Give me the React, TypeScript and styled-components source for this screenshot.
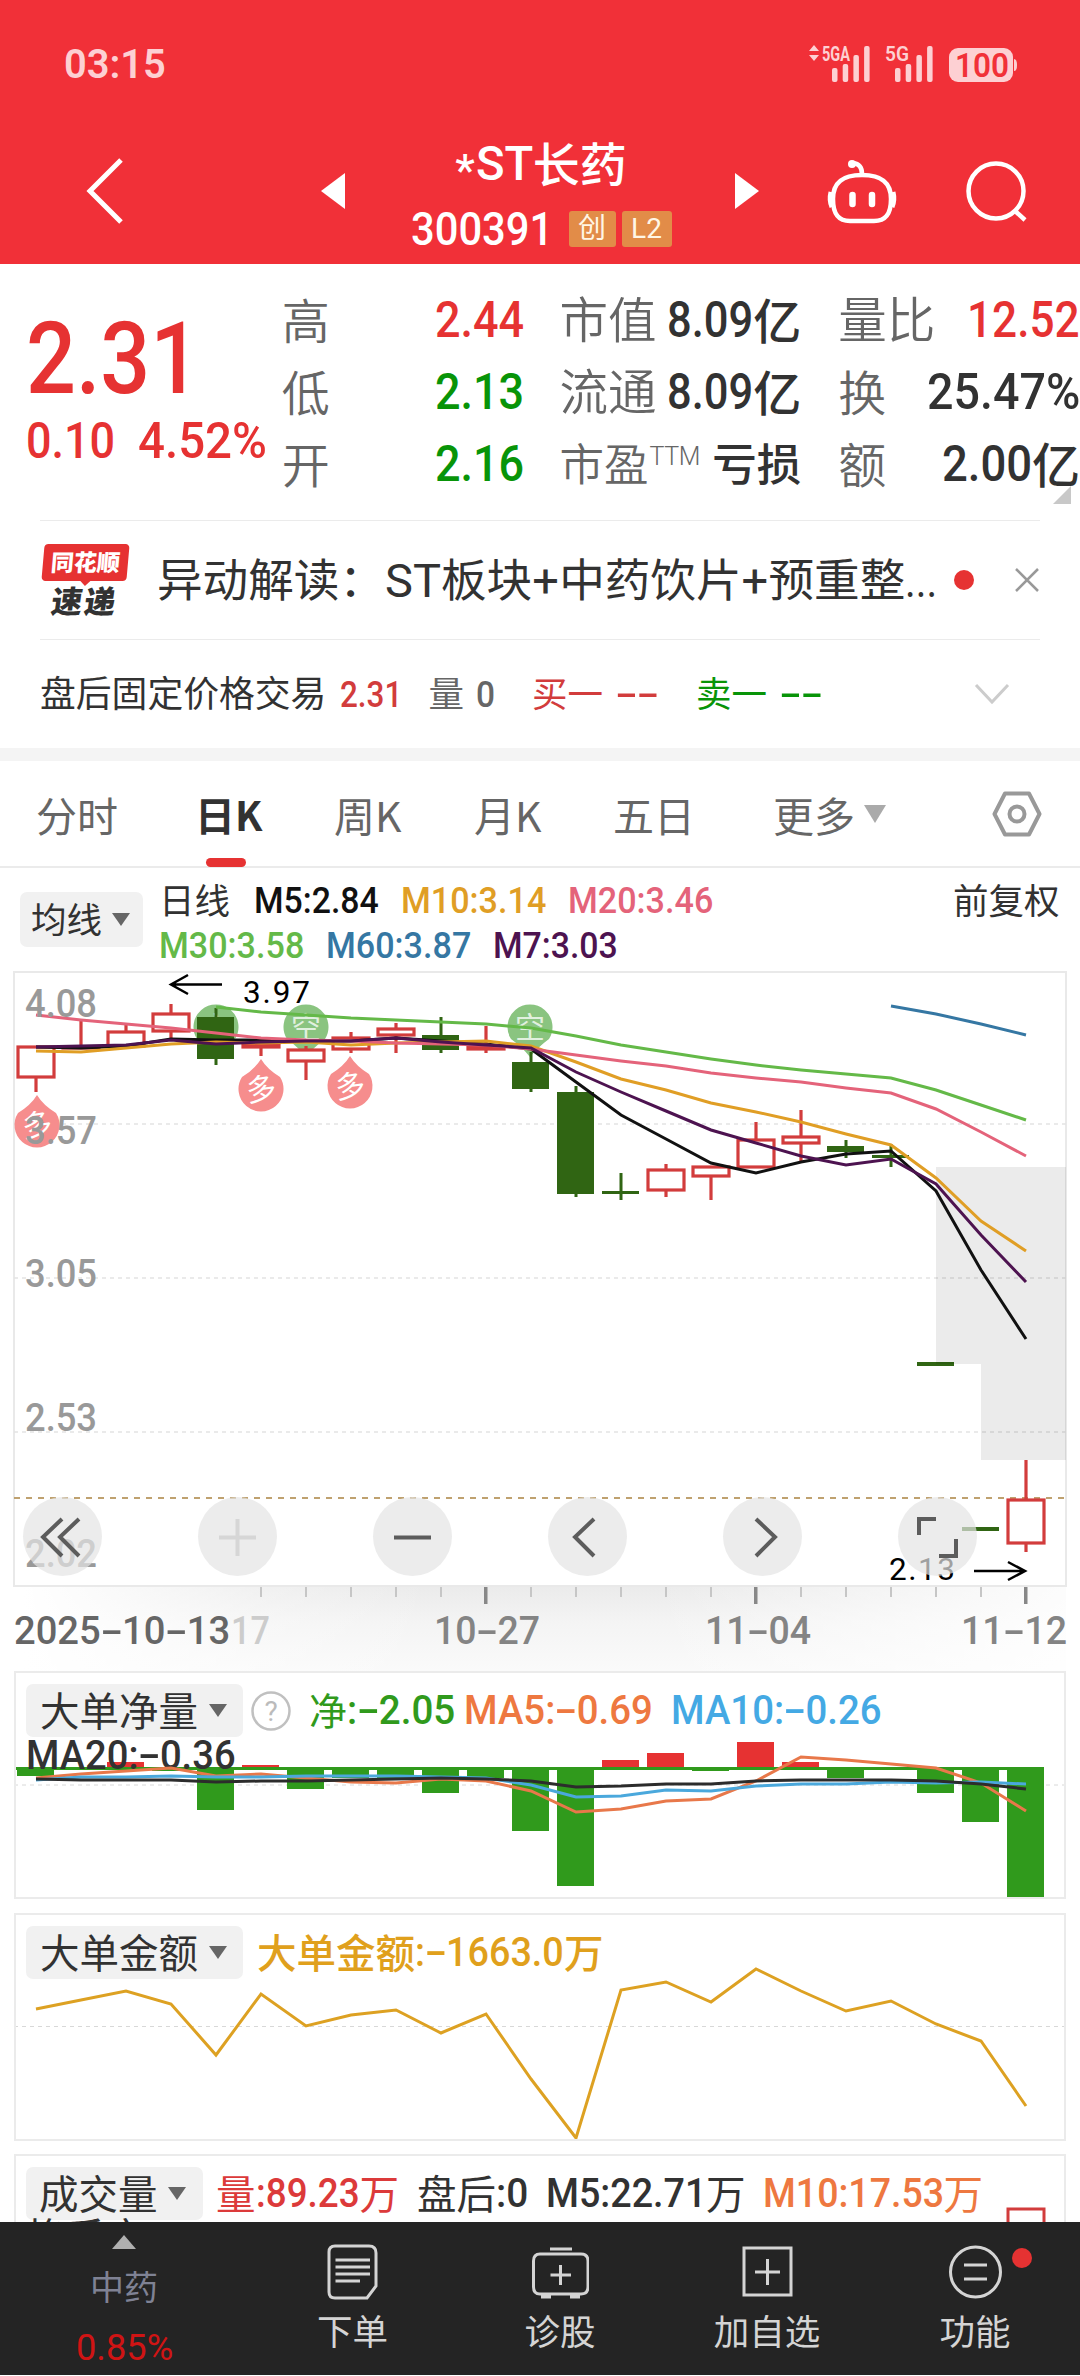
import React, { useLayoutEffect, useRef, useState } from 'react';
import styled, { createGlobalStyle, css } from 'styled-components';

const RED = '#e63232';
const GREEN = '#089408';
const INK = '#323232';
const GREY = '#666666';
const CJK = '"Noto Sans CJK SC", sans-serif';
const DIN = 'Roboto, "Noto Sans CJK SC", sans-serif';

const Global = createGlobalStyle`
  * { box-sizing: border-box; }
  html, body { margin: 0; padding: 0; background: #fff; }
  svg { display: block; flex: none; }
`;

/* ---------- text primitives ---------- */

type TextProps = { $s: number; $c?: string; $wt?: number; $ml?: number };

const textBase = css<TextProps>`
  flex: none;
  font-size: ${p => p.$s}px;
  line-height: 1;
  color: ${p => p.$c || INK};
  font-weight: ${p => p.$wt || 400};
  margin-left: ${p => p.$ml || 0}px;
  white-space: pre;
`;

const Han = styled.span<TextProps>`
  ${textBase}
  font-family: ${CJK};
  padding-bottom: ${p => p.$s * 0.1}px;
`;

const NumBox = styled.span<TextProps & { $w: number }>`
  ${textBase}
  display: block;
  width: ${p => p.$w}px;
  font-family: ${DIN};
`;

const NumInner = styled.span`
  display: inline-block;
  transform-origin: 0 50%;
`;

const Dash = styled.span`
  display: inline-block;
  width: 0.56em;
  text-align: center;
  transform: scaleX(1.75);
`;

type NumProps = { s: number; w: number; c?: string; wt?: number; ml?: number; children: string };

/* Condensed numerals: squeezed horizontally to the slot width. */
function Num({ s, w, c, wt = 500, ml, children }: NumProps) {
  const ref = useRef<HTMLSpanElement>(null);
  const [k, setK] = useState(1);
  useLayoutEffect(() => {
    if (ref.current) setK(w / ref.current.offsetWidth);
  }, [w, children]);
  return (
    <NumBox $s={s} $w={w} $c={c} $wt={wt} $ml={ml}>
      <NumInner ref={ref} style={{ transform: `scaleX(${k})` }}>
        {children.split(/(-)/).map((t, i) => (t === '-' ? <Dash key={i}>-</Dash> : t))}
      </NumInner>
    </NumBox>
  );
}

/* ---------- page frame ---------- */

const Page = styled.main`
  width: 1080px;
  height: 2376px;
  overflow: hidden;
  display: flex;
  flex-direction: column;
  background: #fff;
  font-family: ${DIN};
`;

const Row = styled.div<{ $h?: number; $pl?: number; $mt?: number }>`
  display: flex;
  align-items: center;
  flex: none;
  height: ${p => (p.$h ? `${p.$h}px` : 'auto')};
  padding-left: ${p => p.$pl || 0}px;
  margin-top: ${p => p.$mt || 0}px;
`;

/* ---------- red header ---------- */

const Header = styled.header`
  flex: none;
  height: 264px;
  background: #f13038;
`;

const StatusBar = styled.div`
  display: flex;
  align-items: center;
  justify-content: space-between;
  height: 128px;
  padding: 0 62px 0 64px;
`;

const TitleBar = styled.div`
  display: flex;
  align-items: center;
  height: 126px;
  padding-left: 84px;
`;

const TitleBlock = styled.div`
  flex: none;
  width: 390px;
  padding: 9px 0 0 2px;
  display: flex;
  flex-direction: column;
  align-items: center;
`;

const Tag = styled.span<{ $w: number }>`
  display: flex;
  align-items: center;
  justify-content: center;
  width: ${p => p.$w}px;
  height: 36px;
  margin-left: ${p => (p.$w > 47 ? 6 : 16)}px;
  border-radius: 3px;
  background: #e28c48;
  color: #fff6e6;
  font: 400 28px/36px ${DIN};
`;

const Star = styled.span`
  position: relative;
  top: 7px;
  margin-right: 1px;
  font: 500 44px/1 ${DIN};
  color: #fff;
`;

function StatusIcons() {
  const tone = '#fdd0d3';
  const bars = (x: number) =>
    [14, 18, 27, 36].map((h, i) => (
      <rect key={i} x={x + i * 10.7} y={42 - h} width="5.500" height={h} rx="2" fill={tone} />
    ));
  return (
    <svg width="210" height="48" viewBox="0 0 210 48">
      <path d="M1 11l5-6 5 6zM1 15h10l-5 6z" fill={tone} />
      <text x="14" y="21" fontSize="21" fontWeight="700" fontFamily={DIN} fill={tone} textLength="28" lengthAdjust="spacingAndGlyphs">5GA</text>
      {bars(24)}
      <text x="77" y="21" fontSize="21" fontWeight="600" fontFamily={DIN} fill={tone} textLength="24" lengthAdjust="spacingAndGlyphs">5G</text>
      {bars(87)}
      <rect x="141" y="8" width="64" height="34" rx="9" fill={tone} />
      <path d="M206 19q3 0 3 6t-3 6z" fill={tone} />
      <text x="147" y="37" fontSize="33" fontWeight="600" fontFamily={DIN} fill="#f13038" textLength="54" lengthAdjust="spacingAndGlyphs">100</text>
    </svg>
  );
}

function RobotIcon() {
  return (
    <svg width="74" height="68" viewBox="0 0 74 68" fill="none" stroke="#fff" strokeWidth="4.500">
      <path d="M37 18c-20 0-29 8-29 24 0 16 6 22 17 22h24c11 0 17-6 17-22 0-16-9-24-29-24z" />
      <path d="M6 35q-2 8 1 15M68 35q2 8-1 15" strokeWidth="5" />
      <path d="M37 17q0-10-9-11" />
      <circle cx="27" cy="7" r="4" fill="#fff" stroke="none" />
      <path d="M27.500 38v9M47 38v9" strokeWidth="6.500" strokeLinecap="round" />
    </svg>
  );
}

/* ---------- quote summary ---------- */

const Quote = styled.section`
  flex: none;
  position: relative;
  display: flex;
  height: 256px;
`;

const PriceCol = styled.div`
  width: 282px;
  padding: 44px 0 0 26px;
`;

const StatCol = styled.div<{ $w: number; $ml?: number }>`
  width: ${p => p.$w}px;
  margin-left: ${p => p.$ml || 0}px;
  padding-top: 20px;
`;

const Stat = styled.div`
  display: flex;
  align-items: center;
  justify-content: space-between;
  height: 72px;
`;

const Cluster = styled.div`
  display: flex;
  align-items: center;
`;

const Sup = styled.sup`
  font: 300 25px/1 ${DIN};
  color: ${GREY};
  letter-spacing: -0.4px;
  margin: -16px auto 0 1px;
`;

const Corner = styled.i`
  position: absolute;
  right: 9px;
  bottom: 16px;
  border-left: 18px solid transparent;
  border-bottom: 18px solid #c8c8c8;
`;

const Rule = styled.div`
  flex: none;
  height: 1px;
  margin: 0 40px;
  background: #ebebeb;
`;

/* ---------- news row ---------- */

const Logo = styled.div`
  flex: none;
  width: 88px;
  display: flex;
  flex-direction: column;
  align-items: center;
`;

const LogoTop = styled.div`
  position: relative;
  width: 85px;
  height: 37px;
  border-radius: 4px;
  background: ${RED};
  color: #fff;
  transform: skewX(-5deg);
  font: 900 23px/35px ${CJK};
  text-align: center;
  &::after {
    content: '';
    position: absolute;
    left: 39px;
    top: 37px;
    border: 5px solid transparent;
    border-top-color: ${RED};
    border-bottom: 0;
  }
`;

const LogoBottom = styled.div`
  height: 35px;
  font: 900 31px/38px ${CJK};
  letter-spacing: 2px;
  color: ${INK};
  transform: skewX(-8deg);
`;

const Dot = styled.i<{ $ml: number }>`
  flex: none;
  width: 20px;
  height: 20px;
  margin-left: ${p => p.$ml}px;
  border-radius: 50%;
  background: ${RED};
`;

const Band = styled.div`
  flex: none;
  height: 13px;
  background: #f4f4f4;
`;

/* ---------- tabs ---------- */

const Tabs = styled.nav`
  flex: none;
  display: flex;
  align-items: center;
  height: 107px;
  padding-left: 36px;
  border-bottom: 2px solid #ebebeb;
`;

const TabItem = styled.span<{ $w: number; $active?: boolean }>`
  position: relative;
  flex: none;
  width: ${p => p.$w}px;
  font: ${p => (p.$active ? 700 : 400)} ${p => (p.$active ? 40 : 41)}px/60px ${CJK};
  color: ${p => (p.$active ? INK : GREY)};
  &::after {
    content: '';
    display: ${p => (p.$active ? 'block' : 'none')};
    position: absolute;
    left: 11px;
    top: 74px;
    width: 40px;
    height: 9px;
    border-radius: 5px;
    background: ${RED};
  }
`;

/* ---------- chart area ---------- */

const Legend = styled.div`
  flex: none;
  display: flex;
  height: 103px;
  padding-left: 20px;
`;

const Pill = styled.div<{ $w: number; $h: number; $mt: number; $pl: number }>`
  flex: none;
  display: flex;
  align-items: center;
  width: ${p => p.$w}px;
  height: ${p => p.$h}px;
  margin-top: ${p => p.$mt}px;
  padding-left: ${p => p.$pl}px;
  border-radius: 7px;
  background: #f1f1f1;
`;

const Caret = styled.i<{ $ml: number; $c?: string; $r?: number }>`
  flex: none;
  margin-left: ${p => p.$ml}px;
  border: ${p => p.$r || 9}px solid transparent;
  border-top: ${p => (p.$r ? 18 : 13)}px solid ${p => p.$c || '#666'};
  border-bottom: 0;
`;

const LegendRows = styled.div`
  width: 790px;
  margin-left: 16px;
`;

const Chart = styled.section`
  flex: none;
  position: relative;
  height: 616px;
`;

const Controls = styled.div`
  position: absolute;
  left: 23px;
  top: 526px;
  display: flex;
  gap: 96px;
`;

const RoundButton = styled.button<{ $dim?: boolean }>`
  width: 79px;
  height: 79px;
  padding: 0;
  border: 0;
  border-radius: 50%;
  background: rgba(228, 228, 228, 0.7);
  color: ${p => (p.$dim ? '#d6d6d6' : '#5c5c5c')};
`;

const Axis = styled.div`
  flex: none;
  height: 84px;
  margin: 0 14px;
  background: linear-gradient(to right, #fff 10px, rgba(255, 255, 255, 0.3) 240px, rgba(255, 255, 255, 0) 420px, rgba(255, 255, 255, 0) 640px, rgba(255, 255, 255, 0.85) 1050px),
    linear-gradient(#ebebeb, #f4f4f4 36px, #fafafa 84px);
`;

const Pane = styled.section<{ $h: number; $mb: number }>`
  flex: none;
  position: relative;
  height: ${p => p.$h}px;
  margin: 0 14px ${p => p.$mb}px;
  border: 2px solid #ebebeb;
  overflow: hidden;
`;

const PaneArt = styled.svg`
  position: absolute;
  left: -16px;
  top: -2px;
`;

const PaneHead = styled.div`
  display: flex;
  align-items: center;
  height: 53px;
  margin: 11px 0 0 10px;
`;

const PaneOver = styled.div`
  position: relative;
`;

const centre = (i: number) => 36 + i * 45;

/* [up?, bodyTop, bodyBottom, high, low] in screen units */
const CANDLES: [boolean, number, number, number, number][] = [
  [true, 1048, 1078, 1048, 1093],
  [true, 1048, 1049, 1022, 1050],
  [true, 1033, 1047, 1026, 1033],
  [true, 1015, 1032, 1005, 1040],
  [false, 1018, 1060, 1009, 1066],
  [true, 1045, 1048, 1045, 1057],
  [true, 1051, 1062, 1047, 1081],
  [true, 1039, 1050, 1033, 1054],
  [true, 1030, 1036, 1024, 1054],
  [false, 1036, 1051, 1018, 1054],
  [true, 1047, 1050, 1027, 1054],
  [false, 1063, 1090, 1053, 1093],
  [false, 1093, 1195, 1087, 1198],
  [false, 1192, 1195, 1174, 1201],
  [true, 1171, 1191, 1165, 1198],
  [true, 1168, 1177, 1168, 1201],
  [true, 1141, 1168, 1123, 1168],
  [true, 1138, 1144, 1111, 1162],
  [false, 1147, 1153, 1141, 1159],
  [false, 1156, 1159, 1145, 1168],
  [false, 1363, 1367, 1365, 1365],
  [false, 1528, 1532, 1530, 1530],
  [true, 1501, 1544, 1461, 1553],
];

const AVERAGES: { c: string; from: number; y: number[] }[] = [
  { c: '#64b948', from: 4, y: [1008, 1013, 1016, 1019, 1021, 1023, 1025, 1029, 1037, 1046, 1053, 1060, 1066, 1071, 1075, 1079, 1091, 1106, 1121] },
  { c: '#3577a3', from: 19, y: [1007, 1015, 1025, 1036] },
  { c: '#111111', from: 0, y: [1048, 1049, 1047, 1040, 1041, 1041, 1042, 1042, 1039, 1042, 1045, 1050, 1083, 1116, 1140, 1164, 1174, 1163, 1155, 1152, 1192, 1271, 1340] },
  { c: '#e09e25', from: 0, y: [1052, 1053, 1049, 1045, 1043, 1044, 1043, 1046, 1044, 1043, 1042, 1047, 1063, 1080, 1091, 1104, 1113, 1123, 1135, 1146, 1179, 1222, 1252] },
  { c: '#e4637a', from: 0, y: [1016, 1021, 1025, 1029, 1034, 1039, 1041, 1042, 1044, 1045, 1046, 1050, 1056, 1062, 1067, 1074, 1079, 1083, 1089, 1094, 1110, 1133, 1157] },
  { c: '#4d1350', from: 0, y: [1048, 1047, 1046, 1041, 1045, 1043, 1042, 1042, 1039, 1043, 1046, 1049, 1073, 1093, 1112, 1131, 1144, 1157, 1166, 1160, 1185, 1236, 1283] },
];

const line = (ys: number[], from = 0) => ys.map((y, i) => `${centre(i + from)},${y}`).join(' ');

function Balloon({ x, y, down }: { x: number; y: number; down?: boolean }) {
  return (
    <g transform={`translate(${x} ${y})`}>
      <path
        d={down ? 'M-19 12A22.500 22.500 0 1 1 19 12Q8 20 0 30Q-8 20 -19 12z' : 'M-19 -12A22.500 22.500 0 1 0 19 -12Q6 -20 0 -30Q-6 -20 -19 -12z'}
        fill={down ? '#8ac480' : '#f68d8d'}
      />
      <text y="11" fontSize="30" fontFamily={CJK} fill="#fff" fillOpacity={down ? 0.75 : 1} textAnchor="middle" transform={down ? '' : 'rotate(-8)'}>
        {down ? '空' : '多'}
      </text>
    </g>
  );
}

function KLine() {
  return (
    <svg width="1080" height="616" viewBox="0 972 1080 616" fill="none">
      <rect x="14" y="973" width="1052" height="614" stroke="#e9e9e9" strokeWidth="2" />
      {[1125, 1279, 1433].map(y => (
        <path key={y} d={`M14 ${y}H1066`} stroke="#e4e4e4" strokeWidth="1.500" strokeDasharray="4 4" />
      ))}
      <path d="M14 1499H1066" stroke="#bfa16f" strokeWidth="2" strokeDasharray="6 6" />
      <Balloon x={216} y={1028} down />
      <Balloon x={306} y={1028} down />
      <Balloon x={530} y={1028} down />
      <Balloon x={37} y={1126} />
      <Balloon x={261} y={1090} />
      <Balloon x={350} y={1087} />
      {CANDLES.map(([up, a, b, hi, lo], i) => {
        const x = centre(i);
        return up ? (
          <g key={i} stroke="#d23c3c" strokeWidth="3.200">
            <path d={`M${x} ${hi}V${a}M${x} ${b}V${lo}`} />
            <rect x={x - 18} y={a} width="36" height={b - a} fill="#fff" />
          </g>
        ) : (
          <g key={i} fill="#306513">
            <rect x={x - 1.5} y={hi} width="3" height={lo - hi} />
            <rect x={x - 19} y={a} width="37" height={b - a} />
          </g>
        );
      })}
      <path d="M936 1168H1066V1461H981V1365H936z" fill="#000" fillOpacity="0.08" />
      {AVERAGES.map(m => (
        <polyline key={m.c} points={line(m.y, m.from)} stroke={m.c} strokeWidth="3" />
      ))}
      <g fill="#999" fontFamily={DIN} fontSize="38.500" fontWeight="500">
        {[['4.08', 1018], ['3.57', 1145], ['3.05', 1288], ['2.53', 1432], ['2.02', 1568]].map(([t, y]) => (
          <text key={t} x="25" y={y} textLength="72" lengthAdjust="spacingAndGlyphs">{t}</text>
        ))}
      </g>
      <g fill="#000" fontFamily={DIN} fontSize="31.500">
        <text x="243" y="1004" textLength="67" lengthAdjust="spacing">3.97</text>
        <text x="889" y="1581" textLength="66" lengthAdjust="spacing">2.13</text>
      </g>
      <path d="M222 985.500H171M188 976L171 985.500L188 995M974 1572H1025M1008 1563L1025 1572L1008 1581" stroke="#000" strokeWidth="2.500" />
    </svg>
  );
}

const GLYPHS: [string, boolean][] = [
  ['M39 22L20 40L39 59M56 22L37 40L56 59', false],
  ['M39.500 22V59M21 40.500H58', true],
  ['M21 40.500H58', false],
  ['M46 22L27 40L46 59', false],
  ['M33 22L52 40L33 59', false],
  ['M21 38V22H38M41 59H58V42', false],
];

function AxisTicks() {
  return (
    <svg width="1052" height="18" viewBox="14 0 1052 18">
      {Array.from({ length: 18 }, (_, i) => {
        const x = centre(i + 5);
        const major = i % 6 === 5;
        return <rect key={x} x={x - (major ? 2 : 1)} y="0" width={major ? 3.500 : 2} height={major ? 17 : 10} fill={major ? '#888' : '#c6c6c6'} />;
      })}
    </svg>
  );
}

const FLOW_BARS = [1777, 1771, 1763, 1772, 1811, 1766, 1790, 1779, 1779, 1794, 1779, 1832, 1887, 1761, 1754, 1772, 1743, 1763, 1779, 1771, 1794, 1823, 1899];
const FLOW_MA5 = [1779, 1775, 1772, 1769, 1777, 1775, 1779, 1783, 1784, 1780, 1782, 1792, 1813, 1810, 1802, 1800, 1782, 1758, 1761, 1765, 1769, 1784, 1812];
const FLOW_MA10 = [1781, 1778, 1778, 1777, 1778, 1778, 1777, 1777, 1777, 1778, 1779, 1786, 1798, 1797, 1791, 1792, 1787, 1785, 1785, 1783, 1784, 1783, 1785];
const FLOW_MA20 = [1780, 1781, 1781, 1781, 1783, 1782, 1782, 1781, 1780, 1779, 1780, 1782, 1788, 1787, 1785, 1785, 1782, 1781, 1781, 1781, 1782, 1785, 1790];
const AMOUNT = [2010, 2001, 1992, 2005, 2056, 1995, 2027, 2016, 2011, 2034, 2015, 2080, 2139, 1991, 1983, 2003, 1970, 1992, 2012, 2002, 2025, 2042, 2107];

/* ---------- bottom navigation ---------- */

const BottomNav = styled.footer`
  flex: none;
  position: relative;
  display: flex;
  height: 153px;
  background: #242424;
`;

const NavItem = styled.div<{ $w: number }>`
  position: relative;
  display: flex;
  flex-direction: column;
  align-items: center;
  width: ${p => p.$w}px;
  padding-top: 20px;
  gap: 10px;
`;

const Sector = styled.div`
  display: flex;
  flex-direction: column;
  align-items: center;
  width: 248px;
  padding-top: 13px;
`;

const CaretUp = styled.i`
  border: 12.500px solid transparent;
  border-bottom: 14px solid #b0b0b0;
  border-top: 0;
  margin-bottom: 20px;
`;

const Badge = styled.i`
  position: absolute;
  left: 141px;
  top: 26px;
  width: 20px;
  height: 20px;
  border-radius: 50%;
  background: ${RED};
`;

const NAV: { label: string; w: number; d: string }[] = [
  { label: '下单', w: 209, d: 'M11 4H45Q52 4 52 11V44L43 56H11Q5 56 5 50V10Q5 4 11 4zM11.500 18H46M11.500 25H46M11.500 32H46M11.500 39H36' },
  { label: '诊股', w: 206, d: 'M8 12H49Q56 12 56 19V45Q56 52 49 52H8Q1.500 52 1.500 45V19Q1.500 12 8 12zM18 7H40M28.500 23V43M18.500 33H39M9 55H19M38 55H48' },
  { label: '加自选', w: 208, d: 'M5 6H52V53H5zM28.500 17V43M16 30H41' },
  { label: '功能', w: 208, d: 'M3.500 30A25 25 0 1 0 53.500 30A25 25 0 1 0 3.500 30zM17 23H40M17 37H40' },
];

export default function App() {
  return (
    <Page>
      <Global />
      <Header>
        <StatusBar>
          <Num s={41} w={102} c="#fdd0d3" wt={600}>03:15</Num>
          <StatusIcons />
        </StatusBar>
        <TitleBar>
          <svg width="42" height="70" viewBox="0 0 42 70"><path d="M37 4L6 35L37 66" fill="none" stroke="#fff" strokeWidth="5" /></svg>
          <svg width="24" height="36" viewBox="0 0 24 36" style={{ marginLeft: 195 }}><path d="M24 0V36L0 18z" fill="#fff" /></svg>
          <TitleBlock>
            <Cluster>
              <Star>*</Star>
              <Num s={48} w={57} c="#fff" wt={500}>ST</Num>
              <Han $s={47} $c="#fff" $wt={500}>长药</Han>
            </Cluster>
            <Row $h={48} $mt={15}>
              <Num s={47} w={142} c="#fff" wt={500}>300391</Num>
              <Tag $w={47}>创</Tag>
              <Tag $w={50}>L2</Tag>
            </Row>
          </TitleBlock>
          <svg width="24" height="36" viewBox="0 0 24 36"><path d="M0 0V36L24 18z" fill="#fff" /></svg>
          <Row $pl={66}>
            <RobotIcon />
            <Row $pl={67}>
              <svg width="62" height="66" viewBox="0 0 62 66" fill="none" stroke="#fff" strokeWidth="4.500"><circle cx="30" cy="33" r="27.500" /><path d="M48 52L59 62" /></svg>
            </Row>
          </Row>
        </TitleBar>
      </Header>

      <Quote>
        <PriceCol>
          <Num s={101} w={174} c={RED}>2.31</Num>
          <Row $mt={7}>
            <Num s={50} w={89} c={RED}>0.10</Num>
            <Num s={50} w={129} c={RED} ml={23}>4.52%</Num>
          </Row>
        </PriceCol>
        <StatCol $w={243}>
          <Stat><Han $s={48} $c={GREY} $wt={350}>高</Han><Num s={50} w={89} c={RED}>2.44</Num></Stat>
          <Stat><Han $s={48} $c={GREY} $wt={350}>低</Han><Num s={50} w={89} c={GREEN}>2.13</Num></Stat>
          <Stat><Han $s={48} $c={GREY} $wt={350}>开</Han><Num s={50} w={89} c={GREEN}>2.16</Num></Stat>
        </StatCol>
        <StatCol $w={242} $ml={35}>
          <Stat><Han $s={48.5} $c={GREY} $wt={350}>市值</Han><Cluster><Num s={50} w={86}>8.09</Num><Han $s={48} $wt={500}>亿</Han></Cluster></Stat>
          <Stat><Han $s={48.5} $c={GREY} $wt={350}>流通</Han><Cluster><Num s={50} w={86}>8.09</Num><Han $s={48} $wt={500}>亿</Han></Cluster></Stat>
          <Stat><Han $s={44.5} $c={GREY} $wt={350}>市盈</Han><Sup>TTM</Sup><Han $s={44.5} $wt={500}>亏损</Han></Stat>
        </StatCol>
        <StatCol $w={242} $ml={37}>
          <Stat><Han $s={48.5} $c={GREY} $wt={350}>量比</Han><Num s={50} w={113} c={RED}>12.52</Num></Stat>
          <Stat><Han $s={48} $c={GREY} $wt={350}>换</Han><Num s={50} w={153}>25.47%</Num></Stat>
          <Stat><Han $s={48} $c={GREY} $wt={350}>额</Han><Cluster><Num s={50} w={90}>2.00</Num><Han $s={48} $wt={500}>亿</Han></Cluster></Stat>
        </StatCol>
        <Corner />
      </Quote>
      <Rule />

      <Row $h={118} $pl={41}>
        <Logo><LogoTop>同花顺</LogoTop><LogoBottom>速递</LogoBottom></Logo>
        <Han $s={45.6} $ml={28}>异动解读：</Han>
        <Num s={47} w={56} wt={400}>ST</Num>
        <Han $s={45.6}>板块</Han><Num s={47} w={27} wt={400}>+</Num>
        <Han $s={45.6}>中药饮片</Han><Num s={47} w={27} wt={400}>+</Num>
        <Han $s={45.6}>预重整</Han><Num s={47} w={32} wt={400}>...</Num>
        <Dot $ml={17} />
        <svg width="26" height="26" viewBox="0 0 26 26" style={{ marginLeft: 40 }}><path d="M2 2L24 24M24 2L2 24" stroke="#999" strokeWidth="2.500" /></svg>
      </Row>
      <Rule />

      <Row $h={108} $pl={40}>
        <Han $s={35.8}>盘后固定价格交易</Han>
        <Num s={37} w={62} c="#d23c3c" ml={14}>2.31</Num>
        <Han $s={35.5} $c={GREY} $ml={26}>量</Han>
        <Num s={37} w={19} c={GREY} ml={12}>0</Num>
        <Han $s={35.5} $c="#d23c3c" $ml={37}>买一</Han>
        <Num s={37} w={42} c="#d23c3c" ml={13}>--</Num>
        <Han $s={35.5} $c={GREEN} $ml={38}>卖一</Han>
        <Num s={37} w={42} c={GREEN} ml={13}>--</Num>
        <svg width="36" height="24" viewBox="0 0 36 24" style={{ marginLeft: 152 }}><path d="M2 3L18 20L34 3" fill="none" stroke="#ccc" strokeWidth="3" /></svg>
      </Row>
      <Band />

      <Tabs>
        <TabItem $w={159}>分时</TabItem>
        <TabItem $w={139} $active>日K</TabItem>
        <TabItem $w={140}>周K</TabItem>
        <TabItem $w={139}>月K</TabItem>
        <TabItem $w={160}>五日</TabItem>
        <TabItem $w={82}>更多</TabItem>
        <Caret $ml={9} $c="#aaa" $r={11} />
        <svg width="50" height="48" viewBox="0 0 50 48" style={{ marginLeft: 106 }} fill="none" stroke="#999" strokeWidth="4">
          <path d="M13 3.500H37L47.500 24L37 44.500H13L2.500 24z" strokeLinejoin="round" />
          <circle cx="25" cy="24" r="7.500" />
        </svg>
      </Tabs>

      <Legend>
        <Pill $w={123} $h={55} $mt={24} $pl={11}><Han $s={35.5}>均线</Han><Caret $ml={10} /></Pill>
        <LegendRows>
          <Row $h={44} $mt={11}>
            <Han $s={35.5}>日线</Han>
            <Num s={36} w={125} c="#111" ml={24}>M5:2.84</Num>
            <Num s={36} w={145} c="#e09e25" ml={22}>M10:3.14</Num>
            <Num s={36} w={145} c="#e4637a" ml={22}>M20:3.46</Num>
          </Row>
          <Row $h={46}>
            <Num s={36} w={145} c="#64b948">M30:3.58</Num>
            <Num s={36} w={145} c="#3577a3" ml={22}>M60:3.87</Num>
            <Num s={36} w={125} c="#4d1350" ml={22}>M7:3.03</Num>
          </Row>
        </LegendRows>
        <Row $h={44} $mt={11}><Han $s={35.5} $ml={4}>前复权</Han></Row>
      </Legend>

      <Chart>
        <KLine />
        <Controls>
          {GLYPHS.map(([d, dim]) => (
            <RoundButton key={d} $dim={dim}>
              <svg width="79" height="79" viewBox="0 0 79 79"><path d={d} fill="none" stroke="currentColor" strokeWidth="4" /></svg>
            </RoundButton>
          ))}
        </Controls>
      </Chart>

      <Axis>
        <AxisTicks />
        <Row $h={52}>
          <Num s={38.5} w={216} c="#666">2025-10-13</Num>
          <Num s={38.5} w={39} c="#cccccc" ml={1}>17</Num>
          <Num s={38.5} w={106} c="#848484" ml={164}>10-27</Num>
          <Num s={38.5} w={106} c="#848484" ml={165}>11-04</Num>
          <Num s={38.5} w={106} c="#848484" ml={150}>11-12</Num>
        </Row>
      </Axis>

      <Pane $h={228} $mb={14}>
        <PaneArt width="1080" height="228" viewBox="0 1672 1080 228" fill="none">
          <path d="M14 1786H1066" stroke="#d8d8d8" strokeDasharray="4 4" />
          {FLOW_BARS.map((y, i) => (
            <rect key={i} x={centre(i) - 19} y={Math.min(y, 1769)} width="37" height={Math.abs(y - 1769)} fill={y < 1768 ? RED : '#309a1c'} />
          ))}
          <path d="M14 1769.500H1044" stroke="#309a1c" strokeWidth="3" />
        </PaneArt>
        <PaneOver>
          <PaneHead>
            <Pill $w={217} $h={53} $mt={0} $pl={14}><Han $s={39.5}>大单净量</Han><Caret $ml={11} /></Pill>
            <svg width="42" height="42" viewBox="0 0 42 42" style={{ marginLeft: 7 }}>
              <circle cx="21" cy="21" r="18.500" fill="none" stroke="#c0c0c0" strokeWidth="2.500" />
              <text x="21" y="31" fontSize="28" fontFamily={DIN} fill="#bbb" textAnchor="middle">?</text>
            </svg>
            <Han $s={38} $c="#309a1c" $ml={17}>净</Han>
            <Num s={40} w={108} c="#309a1c">:-2.05</Num>
            <Num s={40} w={189} c="#ee7840" ml={9}>MA5:-0.69</Num>
            <Num s={40} w={211} c="#44a9e4" ml={18}>MA10:-0.26</Num>
          </PaneHead>
          <Row $h={34} $pl={10} $mt={2}>
            <Num s={40} w={210} wt={500}>MA20:-0.36</Num>
          </Row>
        </PaneOver>
        <PaneArt width="1080" height="228" viewBox="0 1672 1080 228" fill="none" strokeWidth="3">
          <polyline points={line(FLOW_MA5)} stroke="#e8784a" />
          <polyline points={line(FLOW_MA10)} stroke="#4aa8dc" />
          <polyline points={line(FLOW_MA20)} stroke="#2c2c2c" />
        </PaneArt>
      </Pane>

      <Pane $h={228} $mb={13}>
        <PaneArt width="1080" height="228" viewBox="0 1914 1080 228" fill="none">
          <path d="M14 2027.500H1066" stroke="#d8d8d8" strokeDasharray="4 4" />
          <polyline points={line(AMOUNT)} stroke="#dda122" strokeWidth="3" />
        </PaneArt>
        <PaneOver>
          <PaneHead>
            <Pill $w={217} $h={53} $mt={0} $pl={14}><Han $s={39.5}>大单金额</Han><Caret $ml={11} /></Pill>
            <Han $s={39.5} $c="#e0a01c" $ml={14} $wt={500}>大单金额</Han>
            <Num s={40} w={149} c="#e0a01c">:-1663.0</Num>
            <Han $s={39.5} $c="#e0a01c" $wt={500}>万</Han>
          </PaneHead>
        </PaneOver>
      </Pane>

      <Pane $h={120} $mb={-52}>
        <PaneArt width="1080" height="120" viewBox="0 2155 1080 120" fill="none">
          <rect x="1008" y="2210" width="36" height="80" stroke="#d23c3c" strokeWidth="3" />
        </PaneArt>
        <PaneOver>
          <PaneHead>
            <Pill $w={177} $h={53} $mt={0} $pl={13}><Han $s={39.5}>成交量</Han><Caret $ml={10} /></Pill>
            <Han $s={39.5} $c="#dc3a3a" $ml={13}>量</Han>
            <Num s={40} w={104} c="#dc3a3a">:89.23</Num>
            <Han $s={39.5} $c="#dc3a3a">万</Han>
            <Han $s={39.5} $ml={18}>盘后</Han>
            <Num s={40} w={32}>:0</Num>
            <Num s={40} w={160} ml={18}>M5:22.71</Num>
            <Han $s={39.5}>万</Han>
            <Num s={40} w={181} c="#ee7840" ml={17}>M10:17.53</Num>
            <Han $s={39.5} $c="#ee7840">万</Han>
          </PaneHead>
          <Row $pl={11} $mt={-5}><Han $s={39.5}>换手率</Han></Row>
        </PaneOver>
      </Pane>

      <BottomNav>
        <Sector>
          <CaretUp />
          <Han $s={34} $c="#7f8294">中药</Han>
          <Row $mt={23}><Num s={37} w={97} c="#d01414" wt={400}>0.85%</Num></Row>
        </Sector>
        {NAV.map(n => (
          <NavItem key={n.label} $w={n.w}>
            <svg width="57" height="60" viewBox="0 0 57 60" fill="none" stroke="#d4d4d4" strokeWidth="3"><path d={n.d} /></svg>
            <Han $s={35.5} $c="#d4d4d4">{n.label}</Han>
            {n.label === '功能' && <Badge />}
          </NavItem>
        ))}
      </BottomNav>
    </Page>
  );
}
